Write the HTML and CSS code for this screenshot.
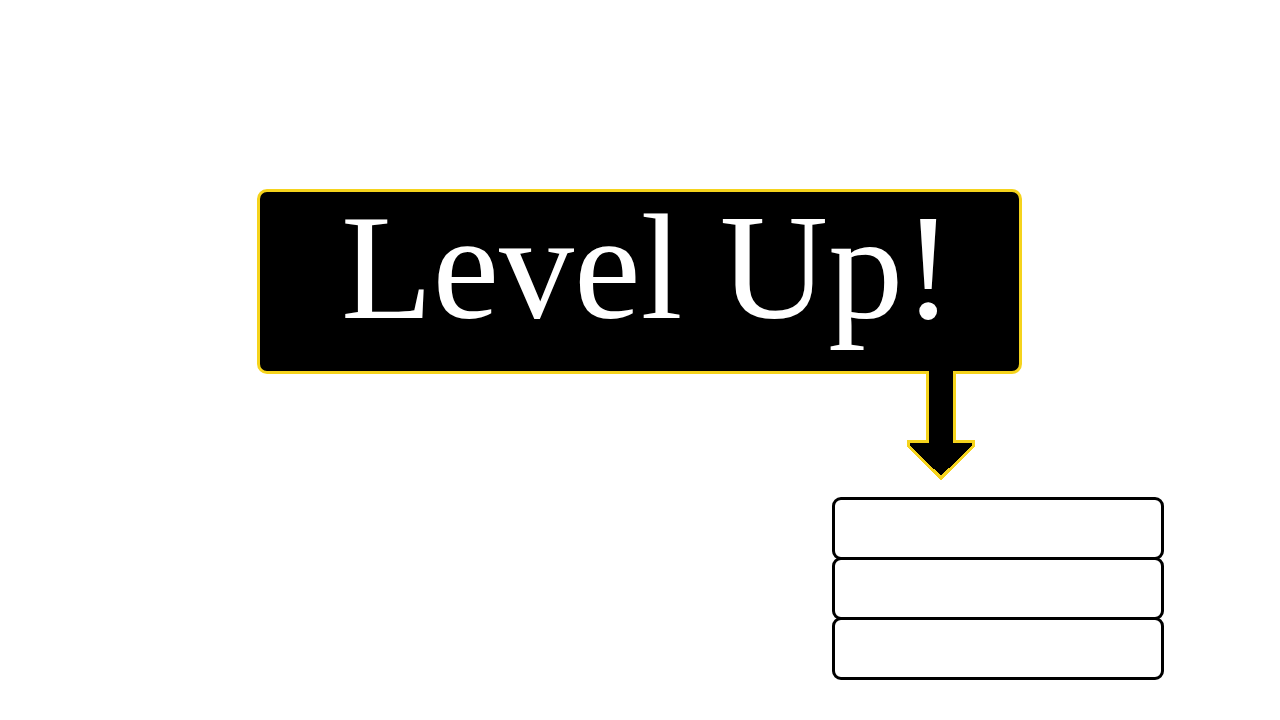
FILE: index.html
```html
<!DOCTYPE html>
<html>
<head>
<meta charset="utf-8">
<link rel="stylesheet" href="styles.css">
</head>
<body>
<div class="stage">
  <div class="banner">
    <div class="title">Level Up!</div>
    <svg class="arrow" width="70" height="112" viewBox="0 0 70 112" shape-rendering="crispEdges">
      <polygon points="20.5,-3 47.5,-3 47.5,70.5 66.5,70.5 66.5,75 34,107 1.5,75 1.5,70.5 20.5,70.5" fill="#000" stroke="#f5d31c" stroke-width="3" stroke-linejoin="miter"/>
    </svg>
  </div>
  <div class="stack">
    <div class="slot"></div>
    <div class="slot"></div>
    <div class="slot"></div>
  </div>
</div>
</body>
</html>
```

FILE: styles.css
```css
html, body {
  margin: 0;
  padding: 0;
  background: #fff;
}
.stage {
  width: 1280px;
  height: 720px;
  padding-top: 189px;
  box-sizing: border-box;
  display: flex;
  flex-direction: column;
  align-items: flex-start;
}
.banner {
  position: relative;
  margin-left: 257px;
  width: 765px;
  height: 185px;
  box-sizing: border-box;
  background: #000;
  border: 3px solid #f5d31c;
  border-radius: 10px;
}
.title {
  font-family: "Liberation Serif", "Times New Roman", serif;
  font-size: 150px;
  line-height: 150px;
  color: #fff;
  text-align: center;
  padding-left: 15px;
}
.arrow {
  position: absolute;
  left: 647px;
  top: 179px;
  overflow: hidden;
}
.stack {
  margin-top: 123px;
  margin-left: 832px;
  display: flex;
  flex-direction: column;
}
.slot {
  width: 332px;
  height: 63px;
  box-sizing: border-box;
  background: #fff;
  border: 3px solid #000;
  border-radius: 9px;
}
.slot + .slot {
  margin-top: -3px;
}
```
